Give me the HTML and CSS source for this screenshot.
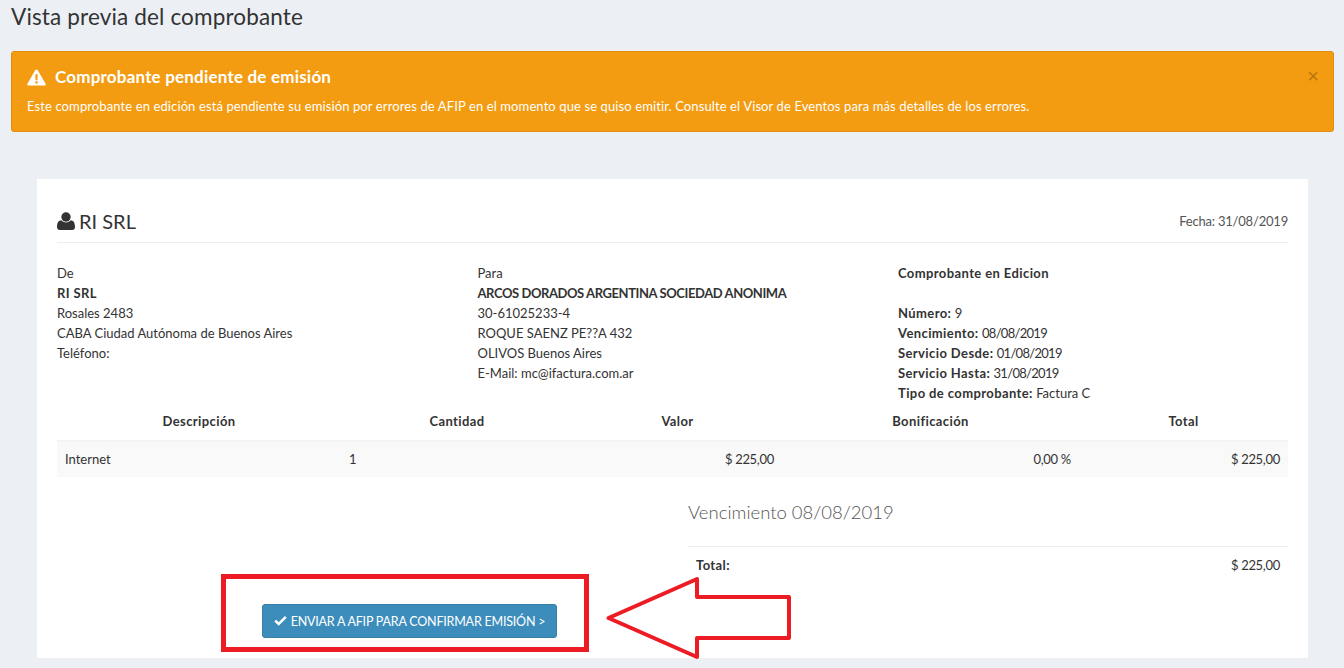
FILE: index.html
```html
<!DOCTYPE html>
<html lang="es">
<head>
<meta charset="utf-8">
<title>Vista previa del comprobante</title>
<link rel="stylesheet" href="styles.css">
</head>
<body>
<h1 class="page-title">Vista previa del comprobante</h1>
<div class="alert">
  <button class="alert-close">×</button>
  <h4 class="alert-title">
    <svg class="icon-warn" viewBox="0 0 20 18"><path fill="#fff" d="M10 .4c.5 0 1 .3 1.2.7l8.4 14.600c.5.9-.1 1.900-1.200 1.900H1.600C.5 17.600-.1 16.600.4 15.700L8.800 1.100C9 .7 9.500.4 10 .4z"/><path fill="#f39c12" d="M8.700 5.500h2.600l-.3 6.400H9zM8.800 13.100h2.400v2.300H8.800z"/></svg>
    Comprobante pendiente de emisión
  </h4>
  <p class="alert-text">Este comprobante en edición está pendiente su emisión por errores de AFIP en el momento que se quiso emitir. Consulte el Visor de Eventos para más detalles de los errores.</p>
</div>
<main class="invoice">
  <header class="invoice-head">
    <h2 class="company">
      <svg class="icon-user" viewBox="0 0 18 18"><circle cx="9" cy="5" r="4.700" fill="#333"/><path fill="#333" d="M4.300 8.300C5.500 9.700 7.200 10.400 9 10.400s3.500-.7 4.700-2.100c2.700.3 4.300 2.400 4.300 6.700 0 1.800-1.200 3-2.800 3H2.800C1.200 18 0 16.800 0 15c0-4.300 1.600-6.400 4.300-6.700z"/></svg>
      RI SRL
    </h2>
    <span class="date">Fecha: 31/08/2019</span>
  </header>
  <section class="info">
    <div class="info-col">
      De<br>
      <b>RI SRL</b><br>
      Rosales 2483<br>
      CABA Ciudad Autónoma de Buenos Aires<br>
      Teléfono:
    </div>
    <div class="info-col">
      Para<br>
      <b class="caps">ARCOS DORADOS ARGENTINA SOCIEDAD ANONIMA</b><br>
      30-61025233-4<br>
      ROQUE SAENZ PE??A 432<br>
      OLIVOS Buenos Aires<br>
      E-Mail: mc@ifactura.com.ar
    </div>
    <div class="info-col">
      <b>Comprobante en Edicion</b><br>
      <br>
      <b>Número:</b> 9<br>
      <b>Vencimiento:</b> <span class="val">08/08/2019</span><br>
      <b>Servicio Desde:</b> <span class="val">01/08/2019</span><br>
      <b>Servicio Hasta:</b> <span class="val">31/08/2019</span><br>
      <b>Tipo de comprobante:</b> Factura C
    </div>
  </section>
  <table class="items">
    <colgroup><col class="c1"><col class="c2"><col class="c3"><col class="c4"><col class="c5"></colgroup>
    <thead>
      <tr><th>Descripción</th><th>Cantidad</th><th>Valor</th><th>Bonificación</th><th>Total</th></tr>
    </thead>
    <tbody>
      <tr><td>Internet</td><td>1</td><td class="num">$ 225,00</td><td class="num">0,00 %</td><td class="num">$ 225,00</td></tr>
    </tbody>
  </table>
  <section class="bottom">
    <div class="action">
      <button class="send"><svg class="icon-check" viewBox="0 0 14 11"><path fill="#fff" d="M5 10.800 .2 6 2.200 4 5 6.800 11.800 0 13.800 2z"/></svg> ENVIAR A AFIP PARA CONFIRMAR EMISIÓN &gt;</button>
      <div class="red-box"></div>
    </div>
    <div class="summary">
      <p class="due">Vencimiento 08/08/2019</p>
      <div class="total-row"><b>Total:</b><span class="amount">$ 225,00</span></div>
    </div>
    <svg class="red-arrow" viewBox="0 0 190 84" width="190" height="84"><path fill="none" stroke="#ed1c24" stroke-width="4" stroke-linejoin="round" d="M2.500 42 91 3V21H183V62H91V81z"/></svg>
  </section>
</main>
</body>
</html>
```
FILE: styles.css
```css
* { box-sizing: border-box; }
html, body { height: 100%; }
body {
  margin: 0;
  height: 668px;
  overflow: hidden;
  background: #ecf0f5;
  color: #333;
  font: 13px/20px "Lato", "Liberation Sans", sans-serif;
  padding: 0 10px 0 11px;
}
b { letter-spacing: .4px; }
b.caps { letter-spacing: -.42px; }
.val { letter-spacing: -.7px; }
.page-title {
  margin: 0;
  padding-top: 4px;
  height: 51px;
  font-size: 22.500px;
  line-height: 26px;
  font-weight: 400;
  color: #333;
  letter-spacing: .15px;
}
.alert {
  position: relative;
  height: 81px;
  padding: 15px 15px 0;
  background: #f39c12;
  border: 1px solid #e08e0b;
  border-radius: 3px;
  color: #fff;
}
.alert-close {
  position: absolute;
  top: 14px;
  right: 14px;
  padding: 0;
  border: 0;
  background: none;
  color: #000;
  opacity: .25;
  font: 400 20px/20px "Liberation Sans", sans-serif;
}
.alert-title {
  display: flex;
  align-items: center;
  gap: 9px;
  margin: 0 0 9px;
  font-size: 17px;
  line-height: 20px;
  font-weight: 700;
  letter-spacing: .2px;
}
.icon-warn { width: 19px; height: 17px; }
.alert-text { margin: 0; font-size: 13px; line-height: 20px; letter-spacing: .11px; }
.invoice {
  margin: 47px 26px 0;
  height: 479px;
  padding: 20px;
  background: #fff;
}
.invoice-head {
  display: flex;
  justify-content: space-between;
  align-items: center;
  height: 44px;
  border-bottom: 1px solid #eee;
}
.company {
  display: flex;
  align-items: center;
  gap: 4px;
  margin: 0;
  font-size: 20px;
  font-weight: 400;
  line-height: 24px;
}
.icon-user { width: 18px; height: 18px; }
.date { color: #555; letter-spacing: -.2px; }
.info {
  display: grid;
  grid-template-columns: 420.500px 420.500px 1fr;
  padding-top: 20px;
  height: 168px;
}
.items {
  width: 100%;
  border-collapse: collapse;
  table-layout: fixed;
}
.c1 { width: 284px; }
.c2 { width: 232px; }
.c3 { width: 209px; }
.c4 { width: 297px; }
.c5 { width: 209px; }
.items th {
  height: 30px;
  padding: 0 8px 9px;
  text-align: center;
  font-weight: 700;
  letter-spacing: .4px;
  border-bottom: 2px solid #f4f4f4;
}
.items td {
  height: 36px;
  padding: 0 8px 2px;
  background: #f9f9f9;
}
.items .num { text-align: right; letter-spacing: -.3px; }
.bottom {
  position: relative;
  display: flex;
  height: 161px;
}
.action {
  width: 631px;
  position: relative;
}
.send {
  position: absolute;
  left: 205px;
  top: 127px;
  width: 295px;
  height: 34px;
  padding: 1px 0 0;
  border: 1px solid #367fa9;
  border-radius: 3px;
  background: #3c8dbc;
  color: #fff;
  font: 12.500px/20px "Lato", "Liberation Sans", sans-serif;
  letter-spacing: -.2px;
  white-space: nowrap;
}
.icon-check { width: 13px; height: 10px; margin-right: 1px; }
.red-box {
  position: absolute;
  left: 164px;
  top: 97px;
  width: 368px;
  height: 78px;
  border: 5px solid #ed1c24;
}
.red-arrow {
  position: absolute;
  left: 549px;
  top: 99px;
}
.summary {
  flex: 1;
}
.due {
  margin: 0;
  padding-top: 23px;
  height: 70px;
  font-size: 18.500px;
  line-height: 24px;
  font-weight: 300;
  color: #555;
  border-bottom: 1px solid #eee;
}
.total-row {
  display: flex;
  justify-content: space-between;
  padding: 8px 8px 0;
}
.amount { letter-spacing: -.3px; }
```
